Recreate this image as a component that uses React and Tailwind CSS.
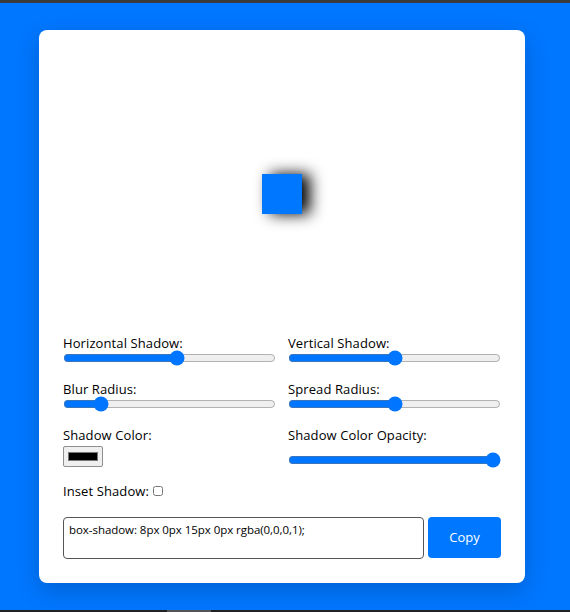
import { useState } from 'react'

const font = { fontFamily: '"Open Sans", "Liberation Sans", sans-serif' }

function Slider({ label, min, max, step = 1, value, onChange }) {
  return (
    <div className="flex flex-col">
      <label className="text-[13px] leading-[18px] tracking-[0.1px] text-black">{label}</label>
      <input
        type="range"
        min={min}
        max={max}
        step={step}
        value={value}
        onChange={e => onChange(Number(e.target.value))}
        className="w-full h-3"
      />
    </div>
  )
}

export default function App() {
  const [h, setH] = useState(8)
  const [v, setV] = useState(0)
  const [blur, setBlur] = useState(15)
  const [spread, setSpread] = useState(0)
  const [color, setColor] = useState('#000000')
  const [opacity, setOpacity] = useState(1)
  const [inset, setInset] = useState(false)

  const r = parseInt(color.slice(1, 3), 16)
  const g = parseInt(color.slice(3, 5), 16)
  const b = parseInt(color.slice(5, 7), 16)
  const shadow = `${inset ? 'inset ' : ''}${h}px ${v}px ${blur}px ${spread}px rgba(${r},${g},${b},${opacity})`

  return (
    <div className="w-[570px] h-[612px] flex flex-col overflow-hidden" style={font}>
      <div className="h-[3px] bg-[#3a3a3a]" />
      <div className="flex-1 bg-[#0077ff] pt-[27px]">
        <div className="ml-[39px] w-[486px] h-[553px] bg-white rounded-lg shadow-[0_8px_24px_rgba(0,0,0,0.18)] px-6 pt-6">
          <div className="h-[280px] flex items-center justify-center">
            <div className="w-10 h-10 bg-[#0077ff]" style={{ boxShadow: shadow }} />
          </div>

          <div className="grid grid-cols-2 gap-x-3 gap-y-4">
            <Slider label="Horizontal Shadow:" min={-100} max={100} value={h} onChange={setH} />
            <Slider label="Vertical Shadow:" min={-100} max={100} value={v} onChange={setV} />
            <Slider label="Blur Radius:" min={0} max={100} value={blur} onChange={setBlur} />
            <Slider label="Spread Radius:" min={-100} max={100} value={spread} onChange={setSpread} />
            <div className="flex flex-col">
              <label className="text-[13px] leading-[18px] tracking-[0.1px] text-black">Shadow Color:</label>
              <input
                type="color"
                value={color}
                onChange={e => setColor(e.target.value)}
                className="mt-[2px] w-10 h-[21px] border border-[#8f8f8f] bg-[#efefef] px-[2px] py-[1px] rounded-[2px]"
              />
            </div>
            <div className="flex flex-col">
              <label className="text-[13px] leading-[18px] tracking-[0.1px] text-black">Shadow Color Opacity:</label>
              <input
                type="range"
                min={0}
                max={1}
                step={0.01}
                value={opacity}
                onChange={e => setOpacity(Number(e.target.value))}
                className="w-full h-3 mt-[10px]"
              />
            </div>
          </div>

          <div className="mt-[14px] flex items-center gap-1 text-[13px] leading-[20px] tracking-[0.1px]">
            <label>Inset Shadow:</label>
            <input type="checkbox" checked={inset} onChange={e => setInset(e.target.checked)} className="w-[10px] h-[10px]" />
          </div>

          <div className="mt-[16px] flex gap-1">
            <textarea
              readOnly
              value={`box-shadow: ${shadow};`}
              className="w-[361px] h-[42px] border border-[#555] rounded px-[5px] pt-[3px] text-[11.5px] leading-[18px] tracking-[-0.05px] resize-none"
            />
            <button className="flex-1 h-[41px] bg-[#0077ff] text-white text-[13px] rounded">Copy</button>
          </div>
        </div>
      </div>
      <div className="h-[2px] bg-[#222] flex">
        <div className="ml-[167px] w-[44px] bg-[#555]" />
      </div>
    </div>
  )
}
